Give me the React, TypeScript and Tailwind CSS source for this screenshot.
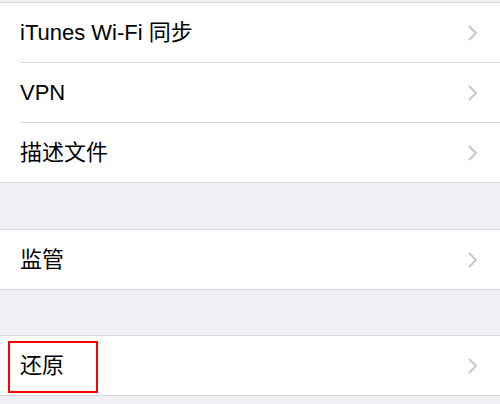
import React from 'react';

function Chevron() {
  return (
    <svg width="10" height="16" viewBox="0 0 10 16" fill="none" className="shrink-0">
      <polyline points="1.5,1.5 8,8 1.5,14.5" stroke="#c7c7cc" strokeWidth="2" strokeLinecap="round" strokeLinejoin="round" />
    </svg>
  );
}

function Row({ label, boxed = false }: { label: string; boxed?: boolean }) {
  return (
    <div className="relative flex h-[59px] items-center justify-between bg-white pl-5 pr-[22px]">
      <span className="text-[22px] leading-none text-black">{label}</span>
      <Chevron />
      {/* highlight box around the item */}
      {boxed && (
        <div className="absolute left-[8px] top-[5px] h-[52px] w-[90px] border-2 border-[#ff0000]" />
      )}
    </div>
  );
}

function Separator() {
  return (
    <div className="bg-white pl-5">
      <div className="h-px bg-[#d9d9dd]" />
    </div>
  );
}

export default function App() {
  return (
    <div
      className="h-[404px] w-[500px] overflow-hidden bg-[#efeff4]"
      style={{ fontFamily: '"Liberation Sans", "Noto Sans CJK SC", sans-serif' }}
    >
      <div className="h-[2px]" />
      <div className="border-y border-[#d9d9dd]">
        <Row label="iTunes Wi-Fi 同步" />
        <Separator />
        <Row label="VPN" />
        <Separator />
        <Row label="描述文件" />
      </div>

      <div className="h-[46px]" />
      <div className="border-y border-[#d9d9dd]">
        <Row label="监管" />
      </div>

      <div className="h-[45px]" />
      <div className="border-y border-[#d9d9dd]">
        <Row label="还原" boxed />
      </div>
    </div>
  );
}
